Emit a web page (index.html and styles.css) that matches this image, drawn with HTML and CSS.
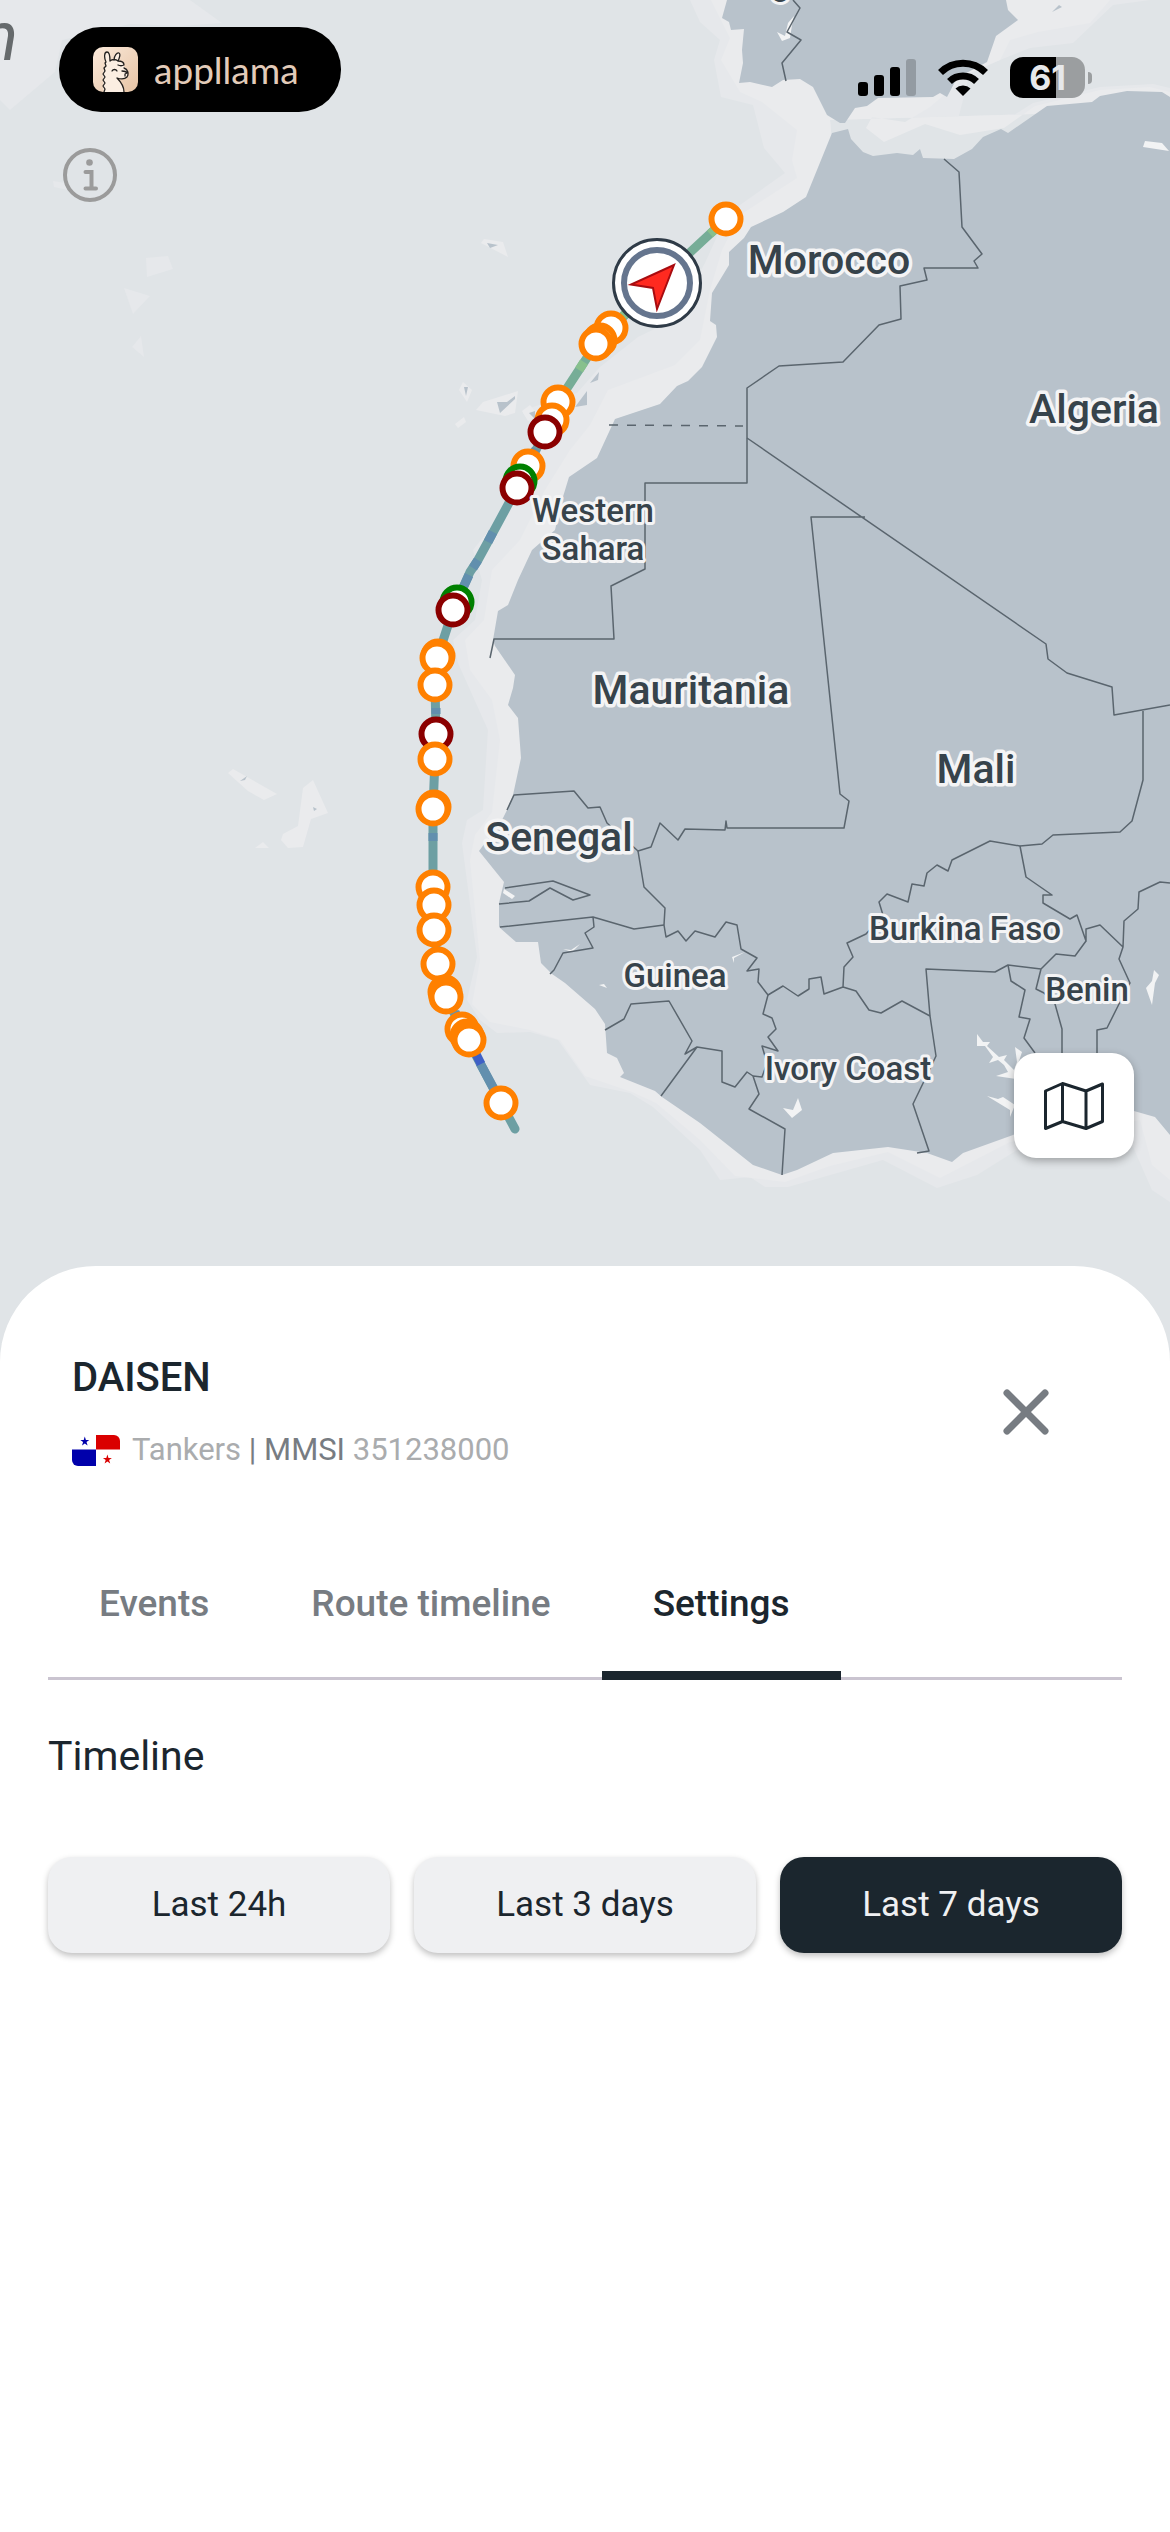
FILE: index.html
```html
<!DOCTYPE html>
<html lang="en">
<head>
<meta charset="utf-8">
<meta name="viewport" content="width=device-width, initial-scale=1">
<title>DAISEN – vessel route</title>
<link rel="stylesheet" href="styles.css">
</head>
<body>
<div class="screen">
  <section class="map" aria-label="Vessel route map">
    <svg class="map-canvas" viewBox="0 0 1170 1362" role="img" aria-label="Route along the coast of West Africa">
      <!-- shallow water -->
      <g class="shelf-outer">
        <path d="M0 0H190L222 23 180 26 130 24 62 40 55 72 10 110 0 100Z"/>
        <path d="M146 258l22-2 5 13-26 8zM124 288l26 8-17 18zM132 347l9-11 3 21zM53 181l12 2 8 8-19-4z"/>
        <path d="M690 0L700 22 720 40 714 60 721 97 753 105 764 148 785 173 733 210 720 230 705 263 673 320 638 337 600 367 577 393 533 407 523 413 533 427 540 463 505 510 473 550 482 580 475 620 453 640 458 663 488 730 483 810 467 820 462 843 477 957 467 1000 480 1020 497 1033 530 1032 558 1040 590 1085 630 1093 653 1107 700 1150 720 1180 750 1177 765 1187 788 1187 883 1160 937 1188 977 1175 1017 1150 1133 1147 1152 1190 1170 1202V1100L900 900 830 120 1170 110V88L1153 84 1100 87 1033 103 990 130 957 123 970 73 1000 60 1030 48 1073 43 1113 5 1150 0Z"/>
      </g>
      <g class="shelf">
        <path d="M711 0L730 38 721 60 740 92 762 102 797 130 792 160 797 178 740 215 722 250 710 290 700 340 675 365 608 390 590 425 570 450 545 490 520 540 492 570 484 620 465 640 470 670 492 700 500 740 492 812 475 835 470 860 480 960 472 1004 490 1022 530 1030 560 1040 585 1076 632 1092 656 1103 700 1140 735 1176 785 1182 830 1166 888 1152 940 1178 1010 1142 1140 1120 1152 1165 1170 1180V1100L900 900 830 120 1170 110V92L1150 87 1100 90 1035 106 1004 128 960 135 925 124 884 142 866 128 872 117 905 122 930 107 970 73 1000 60 1010 40 1038 32 1090 23 1110 0Z"/>
        <path d="M481 243l3-4 19 3 5 15zM476 410l7-8 35-11-3 22-10 3zM459 390l4-8 9 8-5 12zM455 424l9-7 2 5-8 6zM522 411l8-6 8 10-10 6z"/>
        <path d="M228 773l5-4 44 25-13 6-16-9zM313 780l15 33-17 6-8 28-15 1-7-8 2-6 15-8 5-38zM255 848l8-6 6 6z"/>
      </g>
      <!-- land -->
      <g class="land">
        <path d="M727 0L722 18 729 22 731 30 744 29 742 50 743 63 739 83 750 82 772 87 783 80 800 79 813 87 827 115 840 123 845 123 855 108 867 106 878 98 933 97 940 93 947 97 957 78 987 62 996 36 1018 20 1008 10 1006 0Z"/>
        <path d="M1170 97L1162 92 1127 91 1100 96 1092 102 1047 106 1008 133 1001 129 983 137 972 149 954 159 923 158 920 149 913 155 897 153 873 156 863 152 851 139 848 129 832 133 806 197 783 212 751 227 744 238 729 252 729 265 712 293 710 321 716 325 717 337 702 367 688 381 677 386 660 404 615 419 597 458 569 477 562 500 555 530 532 550 518 580 508 605 498 611 493 640 495 646 515 675 513 688 508 705 518 718 521 758 513 795 507 810 502 820 479 851 504 882 499 903 499 927 516 942 538 942 541 963 552 974 565 983 595 1009 605 1024 607 1053 617 1058 624 1073 620 1077 655 1091 662 1097 700 1123 753 1165 782 1175 797 1170 833 1153 888 1147 927 1153 952 1162 963 1153 1013 1135 1060 1110 1134 1111 1155 1117 1170 1135Z"/>
        <path d="M599 372l-9 11 8-3zM587 391l-12 16 12-2zM497 402h10l8-6v3l-15 14zM464 387h4l-2 9zM487 243l11 2-8 3zM529 413l6-2v8zM1052 12l7-7 3 2zM240 781l7-5-2 4zM313 807l4 2-3 2z"/>
      </g>
      <!-- lakes -->
      <path class="lake" d="M777 32l8 4 3-13 6-7-2 9-2 13-8 3zM1143 147l2-6 17 2 7 8zM977 1034l6 8h7l-3 4 12 11 8-2-3 5 10 10 3-8-2-15 7 5-5 15-1 12-20-3 12-4-4-7-6-5-9 3 4-6-8-11h-8zM987 1096l11 3 5-2 12 8-5 12v-7zM1154 970l5 5-4 8-3 22-6-17 6-7zM783 1108l10 2 5-12 4 12-10 8zM504 889l11 7-3 3-9-6zM732 957l13-5-11 6v5zM563 949l8 1 9-6-5 5-3 3zM599 985l5-1 3 4z"/>
      <!-- borders -->
      <g class="border">
        <path d="M793 0L800 8 787 32 801 40 782 63 786 81"/>
        <path d="M944 159L959 172 962 227 982 254 974 261 978 268H924L927 280 900 286 901 319 879 325 843 362 779 366 747 388V483H645V569L611 586 614 639H494L490 658"/>
        <path d="M747 438L1046 644 1048 659 1067 673 1112 687 1114 715 1170 705M865 517H811L840 794 849 801 844 828H727L726 821 725 830 685 829 678 840 660 823 651 847 638 851 607 823 600 807 588 808 574 791 514 795 507 810"/>
        <path d="M1143 711V780L1132 821 1120 832 1053 835 1042 844 1020 846 990 841 952 860 948 871 937 865 927 873 924 886 912 884 908 902 887 894 879 902 883 915 866 934 847 943 853 957 844 967 843 987 856 991 869 1010 881 1013 902 1001 930 1016M843 987L824 994 821 977 809 979V989L798 996 783 986 768 995"/>
        <path d="M1020 846L1026 877 1052 895H1043V903L1070 919 1077 915 1086 941V929L1100 925 1123 947 1124 921 1138 909 1139 892 1160 882 1170 883M1123 947L1119 959 1130 983 1119 1004 1107 1028 1097 1030V1060"/>
        <path d="M1086 941L1075 956 1056 954 1041 969 1008 965 995 972 926 969 930 1016 936 1056 928 1073 913 1104 929 1151 917 1153M1041 969L1036 989 1044 993 1055 1004 1062 1029V1060M1008 965L1011 981 1025 990 1019 1017 1030 1019 1024 1038 1035 1053"/>
        <path d="M505 888L553 881 590 895 573 900 550 888 529 901 499 904M500 927L593 917 634 929 664 925M593 917L594 927 585 933 593 948 563 953 554 970 550 974"/>
        <path d="M638 851L644 887 665 908 664 925 666 937 678 931 686 941 695 931 715 937 726 922 737 925 741 949 757 958 747 971 759 969 758 982 768 995 763 1014 772 1018 776 1029 768 1037 778 1051 762 1046 767 1063 762 1077 753 1076 747 1072 735 1087 722 1082V1051L697 1047 685 1054 692 1041 669 1001 631 1004 624 1019 605 1030M697 1047L661 1096M753 1076L759 1094 749 1109 785 1129 782 1175"/>
        <path stroke-dasharray="9 9" d="M609 425L743 426"/>
      </g>
      <!-- sailed track, coloured by speed -->
      <g class="track">
        <path stroke="#6d9fa3" d="M545 432L528 466 517 488 490 538 478 560 470 572 453 610 438 656 435 685 436 734 433 809 433 887 434 930 438 964 446 997 462 1029 501 1103 515 1129"/>
        <path stroke="#76ad97" d="M726 219L657 283 596 344 558 402 545 432"/>
        <g stroke-linecap="butt">
          <path stroke="#87c08d" d="M722 223l-12 11M627 312l-10 9M584 362l-5 8"/>
          <path stroke="#628fae" d="M536 449l-4 8M493 532l-5 10M478 560l-5 8M469 575l-6 13M436 708v6M433 833v8M455 1012l3 6M480 1063l14 26"/>
          <path stroke="#3f60c6" d="M472 1046l9 18"/>
        </g>
      </g>
      <g class="stop">
        <circle cx="726" cy="219" r="14.5"/><circle cx="611" cy="328" r="14.5"/><circle cx="600" cy="340" r="14.5"/><circle cx="596" cy="344" r="14.5"/>
        <circle cx="558" cy="402" r="14.5"/><circle cx="552" cy="420" r="14.5"/><circle class="stop-end" cx="545" cy="432" r="14.5"/>
        <circle cx="528" cy="466" r="14.5"/><circle class="stop-start" cx="520" cy="481" r="14.5"/><circle class="stop-end" cx="517" cy="488" r="14.5"/>
        <circle class="stop-start" cx="457" cy="602" r="14.5"/><circle class="stop-end" cx="453" cy="610" r="14.5"/>
        <circle cx="438" cy="656" r="14.5"/><circle cx="437" cy="658" r="14.5"/><circle cx="435" cy="685" r="14.5"/>
        <circle class="stop-end" cx="436" cy="734" r="14.5"/><circle cx="435" cy="759" r="14.5"/>
        <circle cx="434" cy="807" r="14.5"/><circle cx="433" cy="809" r="14.5"/><circle cx="433" cy="887" r="14.5"/><circle cx="434" cy="905" r="14.5"/><circle cx="434" cy="930" r="14.5"/>
        <circle cx="438" cy="964" r="14.5"/><circle cx="445" cy="992" r="14.5"/><circle cx="446" cy="997" r="14.5"/>
        <circle cx="462" cy="1029" r="14.5"/><circle cx="467" cy="1036" r="14.5"/><circle cx="469" cy="1040" r="14.5"/><circle cx="501" cy="1103" r="14.5"/>
      </g>
      <g>
        <circle cx="657" cy="283" r="43.5" fill="#fff" stroke="#2f3b47" stroke-width="3"/>
        <circle cx="657" cy="283" r="33" fill="#fff" stroke="#65758e" stroke-width="6"/>
        <path d="M674 265L631 284.500 653 288 657 309Z" fill="#ff2a20" stroke="#a80c10" stroke-width="2"/>
      </g>
      <!-- place names -->
      <text class="ocean" x="18" y="60">Ocean</text>
      <g class="place">
        <text x="829" y="274">Morocco</text>
        <text x="1094" y="423">Algeria</text>
        <text x="691" y="704">Mauritania</text>
        <text x="976" y="783">Mali</text>
        <text x="559" y="851">Senegal</text>
      </g>
      <g class="place place-small">
        <text x="753" y="-5">Portugal</text>
        <text x="593" y="522">Western</text>
        <text x="593" y="560">Sahara</text>
        <text x="965" y="940">Burkina Faso</text>
        <text x="675" y="987">Guinea</text>
        <text x="848" y="1080">Ivory Coast</text>
        <text x="1087" y="1001">Benin</text>
      </g>
    </svg>

    <div class="overlay">
      <div class="status">
        <div class="brand">
          <svg class="brand-mark" viewBox="0 0 45 45" aria-hidden="true">
            <defs><linearGradient id="sand" x1="0" y1="0" x2="1" y2="1"><stop offset="0" stop-color="#fbeadb"/><stop offset="1" stop-color="#e6c3a4"/></linearGradient></defs>
            <rect width="45" height="45" rx="10" fill="url(#sand)"/>
            <path d="M11 45C9 39 11 34 10 30 9 25 12 22 12 19 12 17 13 16 13 15 11 11 11 5 14 5 17 5 17 11 17 14L21 13C21 9 24 5 26 6 28 8 26 12 25 14 29 14 32 16 31 20 35 21 36 27 34 30 32 32 28 32 24 32 28 36 31 40 31 45Z" fill="#fbeee2"/>
            <path d="M11 45l1-3-2-3 2-3-2-3 2-3-2-3 2-3-1-3 2-2-1-3 1-1C11 11 11 5 14 5S17 11 17 14M21 13C21 9 24 5 26 6S26 12 25 14M17 14c2-2 6-2 8 0 3 0 6 1 6 4-2 1-4 1-6 0M31 21c4 1 5 6 3 9-3 3-7 2-10 1 4 4 7 8 7 14M19 24c1-2 4-2 5 0M29 24c2 0 4 0 5 2l-2 1v2" fill="none" stroke="#22201f" stroke-width="1.300" stroke-linecap="round" stroke-linejoin="round"/>
          </svg>
          <span class="brand-name">appllama</span>
        </div>
        <div class="indicators">
          <svg class="signal" viewBox="0 0 58 38" aria-label="Signal strength"><rect y="23" width="10" height="14" rx="3"/><rect x="16" y="16" width="10" height="21" rx="3"/><rect x="32" y="8" width="10" height="29" rx="3"/><rect x="48" width="10" height="37" rx="3" opacity=".2"/></svg>
          <svg class="wifi" viewBox="0 0 50 38" aria-label="Wi-Fi"><path d="M2.500 13.500A32 32 0 0 1 47.500 13.500M11.500 22.500A19.500 19.500 0 0 1 38.500 22.500" fill="none" stroke="#000" stroke-width="7"/><path d="M17.500 29.500A11 11 0 0 1 32.500 29.500L25 37Z"/></svg>
          <div class="battery"><span class="battery-body">61</span><span class="battery-cap"></span></div>
        </div>
      </div>
      <button class="info" type="button" aria-label="Map attribution">
        <svg viewBox="0 0 54 54" fill="none" stroke="#9b9b9b" stroke-width="4" stroke-linecap="round"><circle cx="27" cy="27" r="25"/><path d="M22.500 24H28.500V40.500M22.500 40.500H33"/><circle cx="26.500" cy="14.500" r="3.300" fill="#9b9b9b" stroke="none"/></svg>
      </button>
    </div>

    <button class="layers" type="button" aria-label="Map layers">
      <svg viewBox="0 0 60 48" fill="none" stroke="#1b262e" stroke-width="3" stroke-linejoin="round"><path d="M1.500 9L18.500 1.500 42 9 58.500 2V39.500L42 46.500 18.500 39.500 1.500 46.500ZM18.500 1.500V39.500M42 9V46.500"/></svg>
    </button>
  </section>

  <main class="sheet">
    <header class="vessel">
      <div class="vessel-text">
        <h1 class="vessel-name">DAISEN</h1>
        <p class="vessel-meta">
          <svg class="flag" viewBox="0 0 48 31" role="img" aria-label="Panama"><path d="M24 0H42A6 6 0 0 1 48 6V14.500H24Z" fill="#da0000"/><path d="M0 14.500H24V31H6A6 6 0 0 1 0 25Z" fill="#0000ab"/><path d="M12.800 1.500L13.900 5H17.300L14.500 7 15.600 10.500 12.800 8.400 10 10.500 11.100 7 8.300 5H11.700Z" fill="#0000ab"/><path d="M35.400 19.500L36.500 23H39.900L37.100 25 38.200 28.500 35.400 26.400 32.600 28.500 33.700 25 30.900 23H34.300Z" fill="#da0000"/></svg>
          <span>Tankers <b>| MMSI</b> 351238000</span>
        </p>
      </div>
      <button class="close" type="button" aria-label="Close">
        <svg viewBox="0 0 46 46" stroke="#777c82" stroke-width="7" stroke-linecap="round"><path d="M4 4L42 42M42 4L4 42"/></svg>
      </button>
    </header>

    <div class="tabs" role="tablist">
      <button class="tab" type="button" role="tab" aria-selected="false">Events</button>
      <button class="tab" type="button" role="tab" aria-selected="false">Route timeline</button>
      <button class="tab" type="button" role="tab" aria-selected="true">Settings</button>
    </div>

    <section role="tabpanel">
      <h2 class="section-title" id="timeline">Timeline</h2>
      <div class="ranges" role="group" aria-labelledby="timeline">
        <button class="range" type="button" aria-pressed="false">Last 24h</button>
        <button class="range" type="button" aria-pressed="false">Last 3 days</button>
        <button class="range" type="button" aria-pressed="true">Last 7 days</button>
      </div>
    </section>
  </main>
</div>
</body>
</html>
```
FILE: styles.css
```css
* { box-sizing: border-box; }

body {
  margin: 0;
  background: #fff;
  color: #1b262e;
  font-family: Roboto, "Liberation Sans", sans-serif;
}

button {
  margin: 0;
  padding: 0;
  border: 0;
  background: none;
  color: inherit;
  font: inherit;
  cursor: pointer;
}

svg { display: block; }

.screen {
  display: flex;
  flex-direction: column;
  min-height: 100vh;
}

/* Map */
.map {
  position: relative;
  overflow: hidden;
  background: #e0e4e7;
}

.map-canvas { width: 100%; height: auto; }
.shelf-outer { fill: #e6e8eb; }
.shelf { fill: #eaebed; }
.land { fill: #b8c2cb; }
.lake { fill: #f2f3f4; }
.border { fill: none; stroke: #5a656e; stroke-width: 1.5; stroke-linejoin: round; }
.track { fill: none; stroke-width: 9; stroke-linecap: round; stroke-linejoin: round; }
.stop { fill: #fff; stroke: #ff8000; stroke-width: 6; }
.stop-end { stroke: #8b0000; }
.stop-start { stroke: #008000; }

.place {
  fill: #37434b;
  stroke: #f4f4f5;
  stroke-width: 7;
  stroke-linejoin: round;
  paint-order: stroke;
  font-size: 41px;
  font-weight: 500;
  text-anchor: middle;
}

.place-small { font-size: 33px; stroke-width: 6; }

.ocean {
  fill: #666a6c;
  font-size: 68px;
  font-style: italic;
  text-anchor: end;
}

.overlay {
  position: absolute;
  inset: 0 0 auto;
  padding: 27px 78px 0 59px;
}

.status {
  display: flex;
  align-items: flex-start;
  justify-content: space-between;
}

.brand {
  display: flex;
  align-items: center;
  gap: 16px;
  height: 85px;
  padding: 0 42px 0 34px;
  border-radius: 42px;
  background: #000;
}

.brand-mark { width: 45px; height: 45px; }
.brand-name { color: #e2cbb9; font-family: Lato, sans-serif; font-size: 37px; line-height: 40px; }

.indicators {
  display: flex;
  align-items: center;
  gap: 22px;
  padding-top: 30px;
}

.signal { width: 58px; height: 38px; }
.wifi { width: 50px; height: 38px; }
.battery { display: flex; align-items: center; gap: 3px; }

.battery-body {
  width: 75px;
  border-radius: 13px;
  background: linear-gradient(90deg, #000 61%, #9b9ea0 61%);
  color: #e6e8ea;
  font: 700 34px/41px Inter, sans-serif;
  text-align: center;
}

.battery-cap { width: 4px; height: 12px; border-radius: 0 4px 4px 0; background: #9b9ea0; }

.info { display: block; width: 54px; margin: 36px 0 0 4px; }

.layers {
  position: absolute;
  right: 36px;
  bottom: 204px;
  display: grid;
  place-items: center;
  width: 120px;
  height: 105px;
  border-radius: 22px;
  background: #fff;
  box-shadow: 0 3px 8px rgba(0, 0, 0, .3);
}

.layers svg { width: 60px; }

/* Bottom sheet */
.sheet {
  position: relative;
  flex: 1;
  margin-top: -96px;
  padding: 88px 48px 48px;
  border-radius: 96px 96px 0 0;
  background: #fff;
}

.vessel {
  display: flex;
  align-items: center;
  justify-content: space-between;
  padding: 0 60px 0 24px;
}

.vessel-name { margin: 0 0 28px; font-size: 40px; font-weight: 500; line-height: 48px; }

.vessel-meta {
  display: flex;
  align-items: center;
  gap: 12px;
  margin: 0;
  color: #aaacae;
  font-size: 31px;
  line-height: 40px;
}

.vessel-meta b { color: #777c82; font-weight: 400; }
.flag { width: 48px; height: 31px; }

.close { display: grid; place-items: center; width: 72px; height: 72px; }
.close svg { width: 46px; }

.tabs {
  display: flex;
  margin-top: 58px;
  box-shadow: inset 0 -3px #cac4d0;
}

.tab {
  padding: 52px 51px;
  color: #777c82;
  font-size: 37px;
  font-weight: 500;
  line-height: 48px;
}

.tab[aria-selected="true"] { color: #1b262e; box-shadow: inset 0 -9px #1b262e; }

.section-title { margin: 52px 0 77px; font-size: 41px; font-weight: 400; line-height: 48px; }

.ranges {
  display: grid;
  grid-template-columns: repeat(3, 1fr);
  gap: 24px;
}

.range {
  padding: 24px 0;
  border-radius: 24px;
  background: #eff0f2;
  box-shadow: 0 3px 6px rgba(0, 0, 0, .25);
  font-size: 35px;
  line-height: 48px;
}

.range[aria-pressed="true"] { background: #1b262e; color: #eff0f2; }
```
